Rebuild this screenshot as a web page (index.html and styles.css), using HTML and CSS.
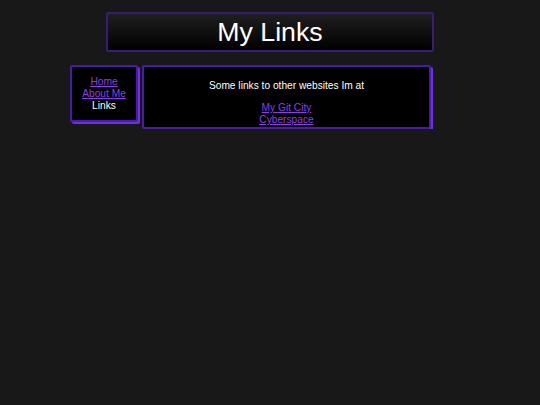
FILE: index.html
```html
<!DOCTYPE html>
<html lang="en">
<head>
<meta charset="utf-8">
<title>My Links</title>
<link rel="stylesheet" href="styles.css">
</head>
<body>
<header class="banner">
  <h1 class="banner-title">My Links</h1>
</header>
<div class="layout">
  <nav class="side-nav">
    <a href="#" class="nav-link">Home</a>
    <a href="#" class="nav-link">About Me</a>
    <span class="nav-current">Links</span>
  </nav>
  <main class="content">
    <p class="intro">Some links to other websites Im at</p>
    <div class="link-list">
      <a href="#">My Git City</a>
      <a href="#">Cyberspace</a>
    </div>
  </main>
</div>
</body>
</html>
```
FILE: styles.css
```css
html, body {
  margin: 0;
  padding: 0;
}
body {
  background: #181818;
  color: #ffffff;
  font-family: "Liberation Sans", Arial, sans-serif;
  font-size: 10.2px;
  line-height: 12px;
  padding-top: 12px;
}
a {
  color: #8a40e0;
  text-decoration: underline;
}
.banner {
  box-sizing: border-box;
  width: 328px;
  height: 40px;
  margin: 0 auto;
  border: 2px solid #3a1c78;
  border-radius: 2px;
  background: linear-gradient(#1f1f1f, #000000);
  display: flex;
  align-items: center;
  justify-content: center;
}
.banner-title {
  margin: 0;
  font-weight: normal;
  font-size: 26.7px;
  line-height: 30px;
  color: #ffffff;
}
.layout {
  width: 400px;
  margin: 13px auto 0;
  display: flex;
  align-items: flex-start;
  gap: 4px;
}
.side-nav {
  box-sizing: border-box;
  width: 68px;
  height: 57px;
  padding-top: 9px;
  border: 2px solid #4a1ca6;
  border-radius: 2px;
  box-shadow: 2px 2px 0 #6e30e0;
  background: #000000;
  display: flex;
  flex-direction: column;
  align-items: center;
}
.nav-current {
  color: #ffffff;
}
.content {
  box-sizing: border-box;
  width: 289px;
  height: 64px;
  padding-top: 13px;
  border: 2px solid #4a1ca6;
  border-radius: 2px;
  box-shadow: 2px 2px 0 #6e30e0;
  background: #000000;
  text-align: center;
}
.intro {
  margin: 0 0 10px;
}
.link-list {
  display: flex;
  flex-direction: column;
  align-items: center;
}
```
